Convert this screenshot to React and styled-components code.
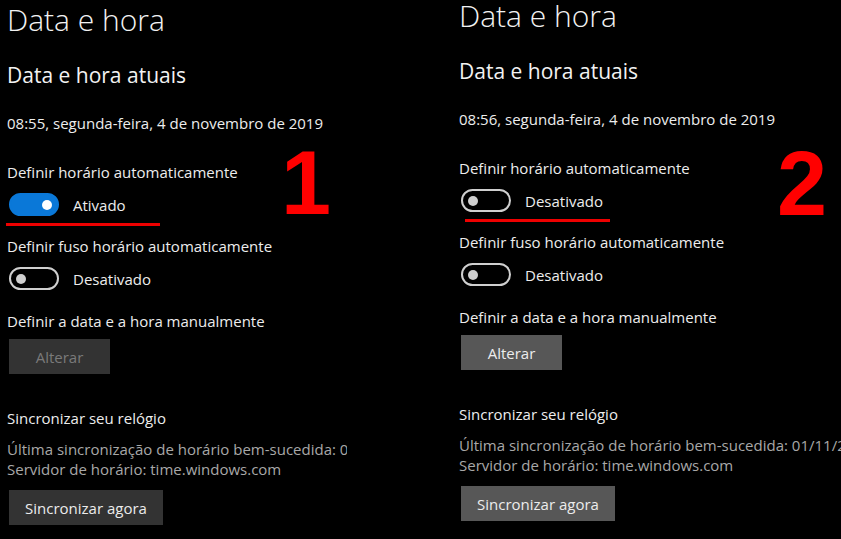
import React from "react";
import styled, { createGlobalStyle } from "styled-components";

const Global = createGlobalStyle`
  html, body { margin: 0; padding: 0; background: #000; }
  body { font-family: "Open Sans", "Noto Sans", sans-serif; color: #fff; }
`;

const Page = styled.div`
  display: flex;
  width: 841px;
  height: 539px;
  background: #000;
  overflow: hidden;
`;

const Panel = styled.section`
  position: relative;
  display: flex;
  flex-direction: column;
  align-items: flex-start;
  box-sizing: border-box;
  width: ${(p) => p.$width};
  flex: ${(p) => (p.$grow ? "1 1 auto" : "0 0 auto")};
  margin-left: ${(p) => p.$ml || 0}px;
  padding: ${(p) => p.$top}px 0 0 7px;
`;

const Title = styled.h1`
  margin: 0;
  font-size: 30px;
  line-height: 32px;
  font-weight: 300;
  color: #f2f2f2;
  white-space: nowrap;
`;

const Subtitle = styled.h2`
  margin: 25px 0 0;
  font-size: 21px;
  line-height: 28px;
  font-weight: 400;
  color: #f2f2f2;
  white-space: nowrap;
`;

const Text = styled.p`
  margin: ${(p) => p.$mt || 0}px 0 0;
  max-width: ${(p) => (p.$clip ? `${p.$clip}px` : "none")};
  overflow: hidden;
  font-size: 15px;
  line-height: 20px;
  color: ${(p) => (p.$muted ? "#a8a8a8" : "#ededed")};
  white-space: nowrap;
`;

const ToggleRow = styled.div`
  display: flex;
  align-items: center;
  gap: 14px;
  margin: 11px 0 0 2px;
  height: 23px;
`;

const Track = styled.span`
  position: relative;
  display: inline-block;
  box-sizing: border-box;
  width: 50px;
  height: 23px;
  border-radius: 12px;
  background: ${(p) => (p.$on ? "#0a78d8" : "transparent")};
  border: 2px solid ${(p) => (p.$on ? "#0a78d8" : "#cfcfcf")};
`;

const Knob = styled.span`
  position: absolute;
  top: 50%;
  width: 10px;
  height: 10px;
  margin-top: -5px;
  border-radius: 50%;
  background: ${(p) => (p.$on ? "#fff" : "#cfcfcf")};
  left: ${(p) => (p.$on ? "31px" : "5px")};
`;

const ToggleLabel = styled.span`
  font-size: 15px;
  line-height: 20px;
  color: #ededed;
`;

const Button = styled.button`
  margin: ${(p) => p.$mt || 0}px 0 0 2px;
  height: 35px;
  min-width: 101px;
  padding: 0 16px;
  border: none;
  background: ${(p) => (p.$disabled ? "#333333" : p.$light ? "#575757" : "#333333")};
  color: ${(p) => (p.$disabled ? "#7a7a7a" : "#ececec")};
  font-family: inherit;
  font-size: 15px;
  line-height: 20px;
`;

const Underline = styled.div`
  position: absolute;
  left: ${(p) => p.$x}px;
  top: ${(p) => p.$y}px;
  width: ${(p) => p.$w}px;
  height: 3px;
  background: #ee0000;
`;

const Marker = styled.div`
  position: absolute;
  left: ${(p) => p.$x}px;
  top: ${(p) => p.$y}px;
  font-family: "Liberation Sans", Arial, sans-serif;
  font-weight: 700;
  font-size: 90px;
  line-height: 90px;
  color: #ff0000;
`;

function Toggle({ on, label }) {
  return (
    <ToggleRow>
      <Track $on={on}>
        <Knob $on={on} />
      </Track>
      <ToggleLabel>{label}</ToggleLabel>
    </ToggleRow>
  );
}

function Settings({ time, auto, sync, light, clip }) {
  return (
    <>
      <Title>Data e hora</Title>
      <Subtitle>Data e hora atuais</Subtitle>
      <Text $mt={24}>{time}, segunda-feira, 4 de novembro de 2019</Text>
      <Text $mt={29}>Definir horário automaticamente</Text>
      <Toggle on={auto} label={auto ? "Ativado" : "Desativado"} />
      <Text $mt={20}>Definir fuso horário automaticamente</Text>
      <Toggle on={false} label="Desativado" />
      <Text $mt={21}>Definir a data e a hora manualmente</Text>
      <Button $mt={8} $disabled={auto} $light={light}>Alterar</Button>
      <Text $mt={34}>Sincronizar seu relógio</Text>
      <Text $mt={11} $muted $clip={clip}>Última sincronização de horário bem-sucedida: {sync}</Text>
      <Text $muted>Servidor de horário: time.windows.com</Text>
      <Button $mt={11} $light={light}>Sincronizar agora</Button>
    </>
  );
}

export default function App() {
  return (
    <>
      <Global />
      <Page>
        <Panel $width="349px" $top={4}>
          <Settings time="08:55" auto sync="01/11/2019 09:12:40" clip={340} />
          <Underline $x={6} $y={223} $w={154} />
          <Marker $x={281} $y={138}>1</Marker>
        </Panel>
        <Panel $grow $ml={103} $top={0}>
          <Settings time="08:56" auto={false} sync="01/11/2019 09:12:40" light />
          <Underline $x={13} $y={219} $w={145} />
          <Marker $x={325} $y={139}>2</Marker>
        </Panel>
      </Page>
    </>
  );
}
